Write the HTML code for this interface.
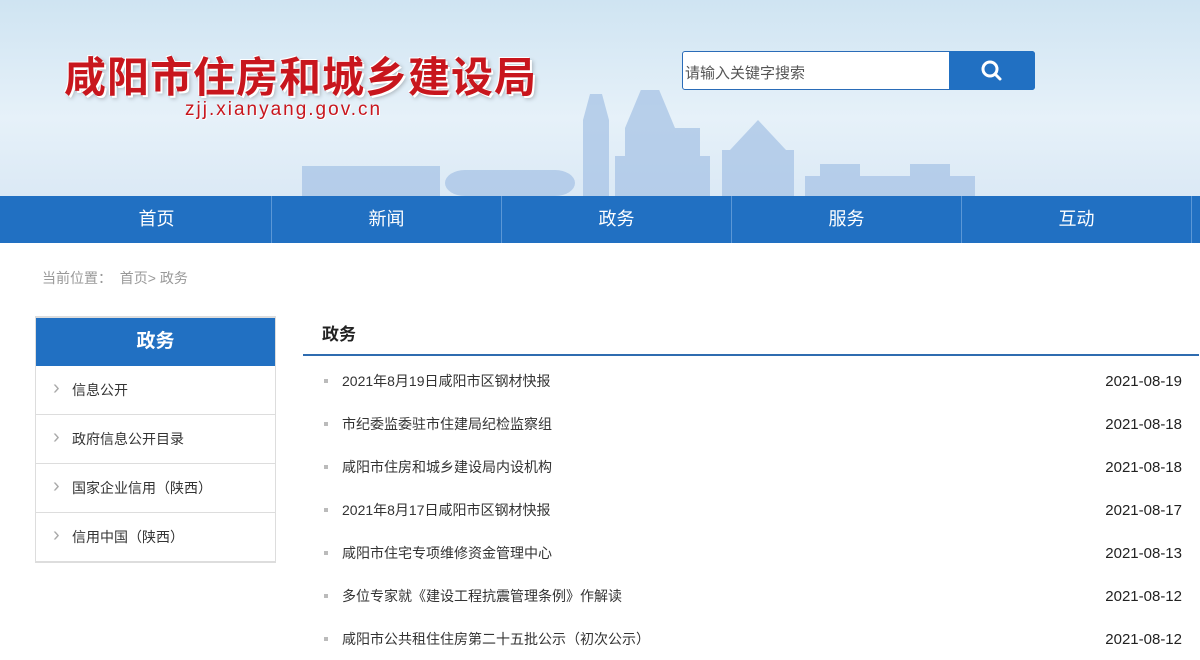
<!DOCTYPE html>
<html><head><meta charset="utf-8"><style>
*{margin:0;padding:0;box-sizing:border-box}
body{width:1200px;height:660px;overflow:hidden;background:#fff;font-family:"Liberation Sans","Noto Sans CJK SC",sans-serif;position:relative}
.hd{position:absolute;left:0;top:0;width:1200px;height:196px;background:linear-gradient(#cfe4f2,#e6f1f9 60%,#dbe9f5)}
.logo{position:absolute;left:64px;top:44px;font-size:42px;font-weight:bold;color:#c8161d;letter-spacing:1px;text-shadow:2px 2px 0 #fff,-1px -1px 0 #fff,3px 3px 4px rgba(0,0,0,.25)}
.url{position:absolute;left:185px;top:99px;font-size:19px;color:#c8161d;letter-spacing:2px;text-shadow:1px 1px 0 #fff}
.search{position:absolute;left:682px;top:51px;width:353px;height:39px;background:#fff;border:1px solid #2a6cb8;border-radius:3px}
.search span{position:absolute;left:2px;top:10px;font-size:15px;color:#555}
.search .btn{position:absolute;right:-1px;top:-1px;width:86px;height:39px;background:#2170c2;border-radius:0 3px 3px 0}
.city{position:absolute;left:300px;top:90px}
.nav{position:absolute;left:0;top:196px;width:1200px;height:47px;background:#2170c2}
.nav div{position:absolute;top:0;width:230px;height:47px;line-height:47px;text-align:center;color:#fff;font-size:18px;border-right:1px solid #5b97d6}
.bc{position:absolute;left:42px;top:268px;font-size:14px;color:#999}
.side{position:absolute;left:35px;top:316px;width:241px;border:1px solid #ddd;border-top:2px solid #ddd}
.side .t{height:48px;background:#2170c2;color:#fff;font-size:19px;font-weight:bold;text-align:center;line-height:48px}
.side .i{height:49px;border-bottom:1px solid #ddd;font-size:14px;color:#333;padding-left:36px;line-height:49px;position:relative}
.side .i:before{content:"›";position:absolute;left:17px;top:-2px;color:#aaa;font-size:20px}
.mt{position:absolute;left:322px;top:320px;font-size:17px;font-weight:bold;color:#222}
.ml{position:absolute;left:303px;top:354px;width:896px;height:2px;background:#2f6cb0}
.row{position:absolute;left:322px;width:860px;font-size:14px;color:#333}
.row:before{content:"";position:absolute;left:2px;top:8px;width:4px;height:4px;background:#bbb}
.row span{position:absolute;left:20px}
.row b{position:absolute;right:0;top:2px;font-weight:normal;font-size:15px;color:#222}
</style></head><body>
<div class="hd">
<svg class="city" width="690" height="106" viewBox="0 0 690 106" fill="#a8c4e6" opacity=".75">
<rect x="2" y="76" width="138" height="30"/>
<rect x="145" y="80" width="130" height="26" rx="20"/>
<rect x="283" y="30" width="26" height="76"/><polygon points="290,4 302,4 309,30 283,30"/>
<rect x="315" y="66" width="95" height="40"/><rect x="325" y="38" width="75" height="30"/><polygon points="345,-10 355,-10 375,38 325,38"/>
<rect x="422" y="60" width="72" height="46"/><polygon points="458,30 430,60 486,60"/>
<rect x="505" y="86" width="170" height="20"/><rect x="520" y="74" width="40" height="14"/><rect x="610" y="74" width="40" height="14"/>
</svg>
<div class="logo">咸阳市住房和城乡建设局</div>
<div class="url">zjj.xianyang.gov.cn</div>
<div class="search"><span>请输入关键字搜索</span><div class="btn"><svg width="86" height="39" viewBox="0 0 86 39"><circle cx="41" cy="18" r="7" fill="none" stroke="#fff" stroke-width="3"/><line x1="46" y1="23" x2="51" y2="28" stroke="#fff" stroke-width="3" stroke-linecap="round"/></svg></div></div>
</div>
<div class="nav">
<div style="left:42px">首页</div><div style="left:272px">新闻</div><div style="left:502px">政务</div><div style="left:732px">服务</div><div style="left:962px">互动</div>
</div>
<div class="bc">当前位置：&nbsp; 首页&gt; 政务</div>
<div class="side"><div class="t">政务</div>
<div class="i">信息公开</div><div class="i">政府信息公开目录</div><div class="i">国家企业信用（陕西）</div><div class="i">信用中国（陕西）</div></div>
<div class="mt">政务</div><div class="ml"></div>
<div class="row" style="top:371px"><span>2021年8月19日咸阳市区钢材快报</span><b>2021-08-19</b></div>
<div class="row" style="top:414px"><span>市纪委监委驻市住建局纪检监察组</span><b>2021-08-18</b></div>
<div class="row" style="top:457px"><span>咸阳市住房和城乡建设局内设机构</span><b>2021-08-18</b></div>
<div class="row" style="top:500px"><span>2021年8月17日咸阳市区钢材快报</span><b>2021-08-17</b></div>
<div class="row" style="top:543px"><span>咸阳市住宅专项维修资金管理中心</span><b>2021-08-13</b></div>
<div class="row" style="top:586px"><span>多位专家就《建设工程抗震管理条例》作解读</span><b>2021-08-12</b></div>
<div class="row" style="top:629px"><span>咸阳市公共租住住房第二十五批公示（初次公示）</span><b>2021-08-12</b></div>
</body></html>
